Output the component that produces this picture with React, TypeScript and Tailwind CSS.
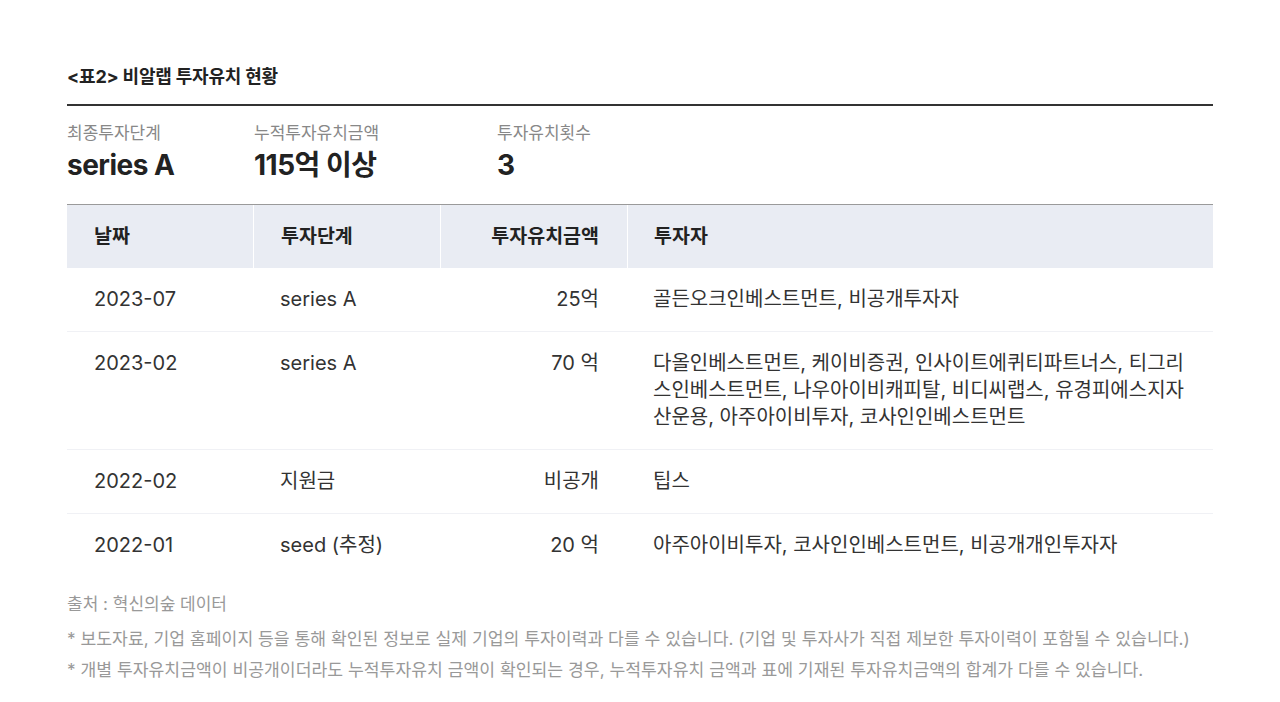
import React from "react";

const font = { fontFamily: 'Inter, "Noto Sans CJK KR", sans-serif' };

const rows = [
  { date: "2023-07", stage: "series A", amount: "25억", investors: ["골든오크인베스트먼트, 비공개투자자"] },
  {
    date: "2023-02",
    stage: "series A",
    amount: "70 억",
    investors: [
      "다올인베스트먼트, 케이비증권, 인사이트에퀴티파트너스, 티그리",
      "스인베스트먼트, 나우아이비캐피탈, 비디씨랩스, 유경피에스지자",
      "산운용, 아주아이비투자, 코사인인베스트먼트",
    ],
  },
  { date: "2022-02", stage: "지원금", amount: "비공개", investors: ["팁스"] },
  { date: "2022-01", stage: "seed (추정)", amount: "20 억", investors: ["아주아이비투자, 코사인인베스트먼트, 비공개개인투자자"] },
];

export default function App() {
  return (
    <div className="w-[1280px] h-[702px] bg-white overflow-hidden" style={font}>
      <div className="px-[67px] pt-[65px]">
        <div className="text-[18px] leading-[24px] font-bold text-[#222] tracking-[-0.2px]">&lt;표2&gt; 비알랩 투자유치 현황</div>
        <div className="mt-[15px] h-[2px] bg-[#333]" />
        <div className="mt-[15px] flex">
          <div className="w-[187px]">
            <div className="text-[17px] leading-[24px] text-[#888]">최종투자단계</div>
            <div className="mt-[3px] text-[28px] leading-[34px] font-bold text-[#222] tracking-[-0.5px]">series A</div>
          </div>
          <div className="w-[243px]">
            <div className="text-[17px] leading-[24px] text-[#888]">누적투자유치금액</div>
            <div className="mt-[3px] text-[28px] leading-[34px] font-bold text-[#222] tracking-[-0.5px]">115억 이상</div>
          </div>
          <div>
            <div className="text-[17px] leading-[24px] text-[#888]">투자유치횟수</div>
            <div className="mt-[3px] text-[28px] leading-[34px] font-bold text-[#222]">3</div>
          </div>
        </div>
        <div className="mt-[22px] border-t border-[#9a9a9a]">
          <div className="grid grid-cols-[186px_187px_187px_1fr] bg-[#e9ecf3] text-[19.5px] font-bold text-[#222] leading-[27px]">
            <div className="py-[18px] pl-[27px]">날짜</div>
            <div className="py-[18px] pl-[27px] border-l border-white">투자단계</div>
            <div className="py-[18px] pr-[28px] text-right border-l border-white">투자유치금액</div>
            <div className="py-[18px] pl-[26px] border-l border-white">투자자</div>
          </div>
          {rows.map((r, i) => (
            <div
              key={r.date}
              className={
                "grid grid-cols-[186px_187px_187px_1fr] text-[20px] leading-[27px] text-[#333] " +
                (i < rows.length - 1 ? "border-b border-[#f0f1f5]" : "")
              }
            >
              <div className="py-[18px] pl-[27px]">{r.date}</div>
              <div className="py-[18px] pl-[27px]">{r.stage}</div>
              <div className="py-[18px] pr-[28px] text-right">{r.amount}</div>
              <div className="py-[18px] pl-[26px] pr-[10px]">
                {r.investors.map((l) => (
                  <div key={l} className="whitespace-nowrap">{l}</div>
                ))}
              </div>
            </div>
          ))}
        </div>
        <div className="mt-[15px] text-[17px] leading-[24px] text-[#999]">출처 : 혁신의숲 데이터</div>
        <div className="mt-[7px] text-[17.2px] leading-[31px] text-[#999]">
          <div>* 보도자료, 기업 홈페이지 등을 통해 확인된 정보로 실제 기업의 투자이력과 다를 수 있습니다. (기업 및 투자사가 직접 제보한 투자이력이 포함될 수 있습니다.)</div>
          <div>* 개별 투자유치금액이 비공개이더라도 누적투자유치 금액이 확인되는 경우, 누적투자유치 금액과 표에 기재된 투자유치금액의 합계가 다를 수 있습니다.</div>
        </div>
      </div>
    </div>
  );
}
